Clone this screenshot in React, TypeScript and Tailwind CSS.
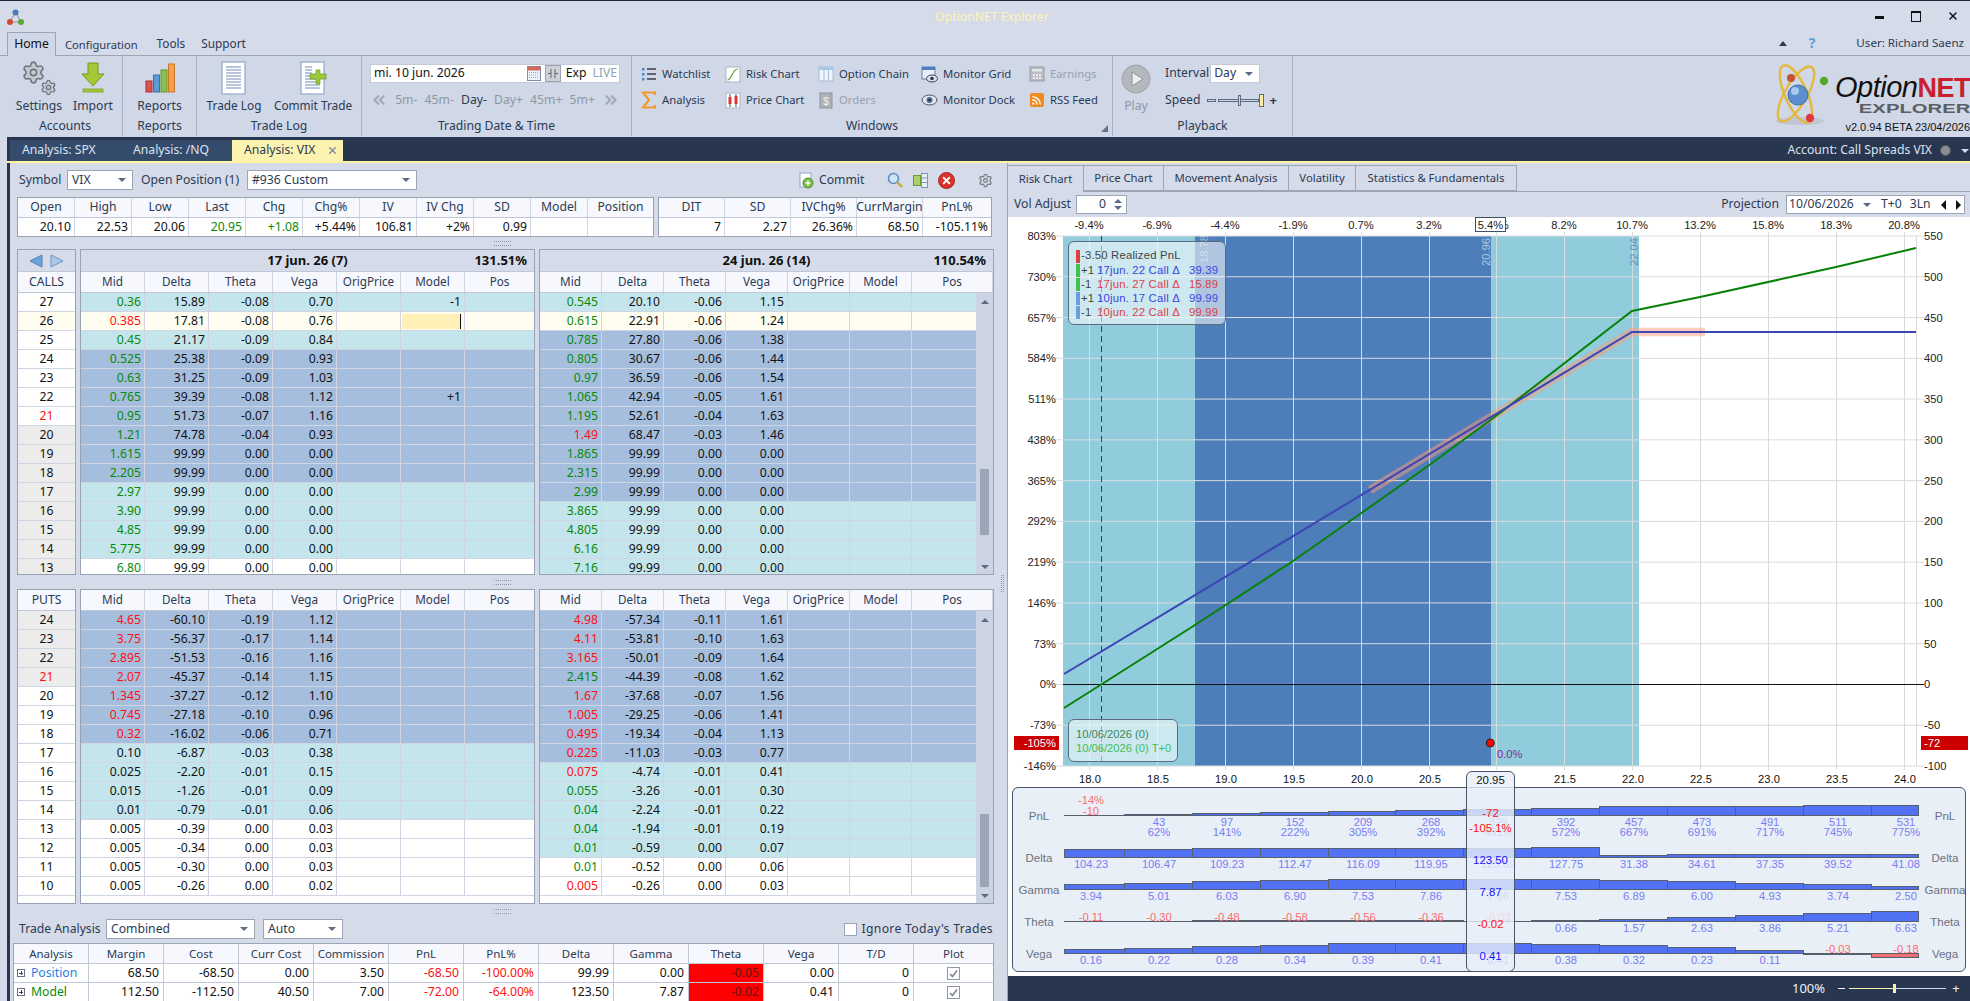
import { ChevronsLeft, ChevronsRight, Rss, Settings, X } from "lucide-react";

type Row = [string, string, string, string, string];

const callsL: Row[] = [
  ["0.36", "15.89", "-0.08", "0.70", "g"],
  ["0.385", "17.81", "-0.08", "0.76", "r"],
  ["0.45", "21.17", "-0.09", "0.84", "g"],
  ["0.525", "25.38", "-0.09", "0.93", "g"],
  ["0.63", "31.25", "-0.09", "1.03", "g"],
  ["0.765", "39.39", "-0.08", "1.12", "g"],
  ["0.95", "51.73", "-0.07", "1.16", "g"],
  ["1.21", "74.78", "-0.04", "0.93", "g"],
  ["1.615", "99.99", "0.00", "0.00", "g"],
  ["2.205", "99.99", "0.00", "0.00", "g"],
  ["2.97", "99.99", "0.00", "0.00", "g"],
  ["3.90", "99.99", "0.00", "0.00", "g"],
  ["4.85", "99.99", "0.00", "0.00", "g"],
  ["5.775", "99.99", "0.00", "0.00", "g"],
  ["6.80", "99.99", "0.00", "0.00", "g"],
];
const callsR: Row[] = [
  ["0.545", "20.10", "-0.06", "1.15", "g"],
  ["0.615", "22.91", "-0.06", "1.24", "g"],
  ["0.785", "27.80", "-0.06", "1.38", "g"],
  ["0.805", "30.67", "-0.06", "1.44", "g"],
  ["0.97", "36.59", "-0.06", "1.54", "g"],
  ["1.065", "42.94", "-0.05", "1.61", "g"],
  ["1.195", "52.61", "-0.04", "1.63", "g"],
  ["1.49", "68.47", "-0.03", "1.46", "r"],
  ["1.865", "99.99", "0.00", "0.00", "g"],
  ["2.315", "99.99", "0.00", "0.00", "g"],
  ["2.99", "99.99", "0.00", "0.00", "g"],
  ["3.865", "99.99", "0.00", "0.00", "g"],
  ["4.805", "99.99", "0.00", "0.00", "g"],
  ["6.16", "99.99", "0.00", "0.00", "g"],
  ["7.16", "99.99", "0.00", "0.00", "g"],
];
const putsL: Row[] = [
  ["4.65", "-60.10", "-0.19", "1.12", "r"],
  ["3.75", "-56.37", "-0.17", "1.14", "r"],
  ["2.895", "-51.53", "-0.16", "1.16", "r"],
  ["2.07", "-45.37", "-0.14", "1.15", "r"],
  ["1.345", "-37.27", "-0.12", "1.10", "r"],
  ["0.745", "-27.18", "-0.10", "0.96", "r"],
  ["0.32", "-16.02", "-0.06", "0.71", "r"],
  ["0.10", "-6.87", "-0.03", "0.38", "k"],
  ["0.025", "-2.20", "-0.01", "0.15", "k"],
  ["0.015", "-1.26", "-0.01", "0.09", "k"],
  ["0.01", "-0.79", "-0.01", "0.06", "k"],
  ["0.005", "-0.39", "0.00", "0.03", "k"],
  ["0.005", "-0.34", "0.00", "0.03", "k"],
  ["0.005", "-0.30", "0.00", "0.03", "k"],
  ["0.005", "-0.26", "0.00", "0.02", "k"],
];
const putsR: Row[] = [
  ["4.98", "-57.34", "-0.11", "1.61", "r"],
  ["4.11", "-53.81", "-0.10", "1.63", "r"],
  ["3.165", "-50.01", "-0.09", "1.64", "r"],
  ["2.415", "-44.39", "-0.08", "1.62", "g"],
  ["1.67", "-37.68", "-0.07", "1.56", "r"],
  ["1.005", "-29.25", "-0.06", "1.41", "r"],
  ["0.495", "-19.34", "-0.04", "1.13", "r"],
  ["0.225", "-11.03", "-0.03", "0.77", "r"],
  ["0.075", "-4.74", "-0.01", "0.41", "r"],
  ["0.055", "-3.26", "-0.01", "0.30", "g"],
  ["0.04", "-2.24", "-0.01", "0.22", "g"],
  ["0.04", "-1.94", "-0.01", "0.19", "g"],
  ["0.01", "-0.59", "0.00", "0.07", "g"],
  ["0.01", "-0.52", "0.00", "0.06", "g"],
  ["0.005", "-0.26", "0.00", "0.03", "r"],
];

const toneClass: Record<string, string> = {
  c: "bg-[#c5e5ed]",
  b: "bg-[#a6bedd]",
  y: "bg-[#fffdf0]",
  w: "bg-white",
  g: "bg-[#ececec]",
};
const midClass: Record<string, string> = {
  g: "text-[#078a07]",
  r: "text-[#ff1010]",
  k: "text-[#111]",
};

const HEADERS = ["Mid", "Delta", "Theta", "Vega", "OrigPrice", "Model", "Pos"];

function Caret({ className = "" }: { className?: string }) {
  return <span className={"w-0 h-0 border-x-[4px] border-x-transparent border-t-[4px] border-t-[#5d6b82] " + className} />;
}

function Select({ label, className }: { label: string; className: string }) {
  return (
    <div className={"h-[20px] bg-white border border-[#9aa5b5] flex items-center justify-between pl-[4px] pr-[6px] text-[#2b3a55] " + className}>
      <span>{label}</span>
      <Caret />
    </div>
  );
}

function Grip({ className = "" }: { className?: string }) {
  return <div className={"w-[17px] h-[5px] border-y border-dotted border-[#8d97a8] " + className} />;
}

function Strikes({ head, items, tones, arrows, height }: { head: string; items: number[]; tones: string; arrows?: boolean; height: string }) {
  return (
    <div className={"w-[59px] shrink-0 border border-[#97a3b5] bg-white overflow-hidden " + height}>
      {arrows && (
        <div className="h-[22px] bg-[#d5dbe8] border-b border-[#c0c7d6] flex items-center justify-center gap-[7px]">
          <svg width="14" height="14" viewBox="0 0 14 14"><path d="M13 1 L1 7 L13 13 Z" fill="#6ea4dc" stroke="#4f7fb8" /></svg>
          <svg width="14" height="14" viewBox="0 0 14 14"><path d="M1 1 L13 7 L1 13 Z" fill="#a9c8ea" stroke="#6d94c0" /></svg>
        </div>
      )}
      <div className="h-[21px] bg-[#f6f8fd] border-b border-[#c0c7d6] flex items-center justify-center text-[#2b3a55]">{head}</div>
      {items.map((s, i) => (
        <div key={s} className={"h-[19px] border-b border-[#cfd5e3] flex items-center justify-center text-[#111] " + toneClass[tones[i]]}>
          <span className={s === 21 ? "text-[#ff1010]" : ""}>{s}</span>
        </div>
      ))}
    </div>
  );
}

function Chain({ title, pct, rows, tones, cols, model, height, scroll, thumb }: {
  title?: string; pct?: string; rows: Row[]; tones: string; cols: string; model?: Record<number, string>; height: string; scroll?: boolean; thumb?: string;
}) {
  return (
    <div className={"flex-1 border border-[#97a3b5] bg-white overflow-hidden flex flex-col " + height}>
      {title && (
        <div className="h-[22px] shrink-0 bg-[#d5dbe8] border-b border-[#c0c7d6] flex items-center justify-center relative font-bold text-[#111] text-[13px]">
          {title}
          <span className="absolute right-[7px]">{pct}</span>
        </div>
      )}
      <div className={"h-[21px] shrink-0 bg-[#f6f8fd] border-b border-[#c0c7d6] grid text-[#2b3a55] text-[11.7px] " + cols}>
        {HEADERS.map((h, i) => (
          <div key={h} className={"flex items-center justify-center " + (i < 6 || scroll ? "border-r border-[#cfd5e3]" : "")}>{h}</div>
        ))}
      </div>
      <div className="flex-1 flex min-h-0">
        <div className="flex-1">
          {rows.map((r, i) => (
            <div key={i} className={"h-[19px] border-b border-[#cfd5e3] grid text-[#111] " + cols + " " + toneClass[tones[i]]}>
              {[r[0], r[1], r[2], r[3]].map((v, j) => (
                <div key={j} className={"flex items-center justify-end pr-[3px] border-r border-[#cfd5e3] " + (j === 0 ? midClass[r[4]] : "")}>{v}</div>
              ))}
              <div className="border-r border-[#cfd5e3]" />
              <div className="border-r border-[#cfd5e3] flex items-center justify-end pr-[3px]">
                {model && model[i]}
                {model && i === 1 && (
                  <div className="w-[59px] h-[15px] bg-[#fff0b8] border-r border-[#111]" />
                )}
              </div>
              <div />
            </div>
          ))}
        </div>
        {scroll && (
          <div className="w-[17px] shrink-0 bg-[#ccd3e3] flex flex-col items-center pt-[7px] pb-[5px]">
            <span className="w-0 h-0 border-x-[4px] border-x-transparent border-b-[4px] border-b-[#5d6b82]" />
            <div className={"w-[9px] bg-[#9aa6b5] " + thumb} />
            <span className="mt-auto w-0 h-0 border-x-[4px] border-x-transparent border-t-[4px] border-t-[#5d6b82]" />
          </div>
        )}
      </div>
    </div>
  );
}

function Summary({ heads, values, cols, className }: { heads: string[]; values: [string, string?][]; cols: string; className: string }) {
  return (
    <div className={"h-[40px] border border-[#97a3b5] bg-white " + className}>
      <div className={"h-[20px] bg-[#f6f8fd] border-b border-[#c0c7d6] grid text-[#2b3a55] " + cols}>
        {heads.map((h, i) => (
          <div key={i} className={"flex items-center justify-center " + (i < heads.length - 1 ? "border-r border-[#cfd5e3]" : "")}>{h}</div>
        ))}
      </div>
      <div className={"h-[18px] grid text-[#111] " + cols}>
        {values.map(([v, c], i) => (
          <div key={i} className={"flex items-center justify-end pr-[3px] " + (c || "") + (i < values.length - 1 ? " border-r border-[#cfd5e3]" : "")}>{v}</div>
        ))}
      </div>
    </div>
  );
}

function CheckBox() {
  return (
    <div className="w-[13px] h-[13px] bg-white border border-[#8e99a8] flex items-center justify-center">
      <svg width="9" height="9" viewBox="0 0 9 9"><path d="M1 5 L3.5 7.5 L8 1.5" fill="none" stroke="#7d8795" strokeWidth="1.6" /></svg>
    </div>
  );
}

function TradeRow({ name, color, cells }: { name: string; color: string; cells: [string, string?][] }) {
  const cols = "grid grid-cols-[75px_75px_75px_75px_75px_75px_75px_75px_75px_75px_75px_75px_1fr]";
  return (
    <div className={"h-[19px] border-b border-[#c0c7d6] text-[#111] " + cols}>
      <div className="flex items-center pl-[3px] gap-[6px] border-r border-[#c0c7d6]">
        <span className="w-[8px] h-[8px] border border-[#667285] relative">
          <span className="absolute left-[1px] right-[1px] top-[2.5px] h-px bg-[#445]" />
          <span className="absolute top-[1px] bottom-[1px] left-[2.5px] w-px bg-[#445]" />
        </span>
        <span className={color}>{name}</span>
      </div>
      {cells.map(([v, c], i) => (
        <div key={i} className={"flex items-center justify-end pr-[4px] border-r border-[#c0c7d6] " + (c || "")}>{v}</div>
      ))}
      <div className="flex items-center justify-center"><CheckBox /></div>
    </div>
  );
}

/* ribbon pictures */
function Gears() {
  return (
    <div className="w-[36px] h-[36px] relative">
      <Settings size={25} className="absolute left-0 top-0" fill="#c5cad2" stroke="#6f7680" strokeWidth={1.5} />
      <Settings size={17} className="absolute right-0 bottom-0" fill="#c5cad2" stroke="#6f7680" strokeWidth={1.8} />
    </div>
  );
}
function ImportIcon() {
  return (
    <svg width="24" height="32" viewBox="0 0 24 32">
      <path d="M7 1 H17 V12 H23 L12 24 L1 12 H7 Z" fill="#a4c935" stroke="#6f9a1e" />
      <rect x="2" y="27" width="20" height="3" fill="#a4c935" stroke="#6f9a1e" strokeWidth="0.7" />
    </svg>
  );
}
function ReportsIcon() {
  return (
    <svg width="30" height="30" viewBox="0 0 30 30">
      <rect x="1" y="18" width="6" height="11" fill="#d9534f" stroke="#a33" />
      <rect x="8.5" y="12" width="6" height="17" fill="#5b9bd5" stroke="#3a70a8" />
      <rect x="16" y="7" width="6" height="22" fill="#8cc152" stroke="#5f9530" />
      <rect x="23.5" y="1" width="6" height="28" fill="#f6a04d" stroke="#c97826" />
    </svg>
  );
}
function DocIcon({ plus }: { plus?: boolean }) {
  const lines = [6, 9, 12, 15, 18, 21, 24, 27];
  return (
    <svg width="28" height="34" viewBox="0 0 28 34">
      <rect x="2" y="1" width="23" height="32" fill="#fff" stroke="#8fa8cc" strokeWidth="1.2" />
      {lines.map((y) => <line key={y} x1="6" x2={plus && y < 18 ? 13 : 21} y1={y} y2={y} stroke="#7f95bd" strokeWidth="1.1" />)}
      {plus && <path d="M17 9 H21 V13 H27 V18 H21 V23 H17 V18 H11 V13 H17 Z" fill="#9ac93c" stroke="#6f9a1e" strokeWidth="0.7" />}
    </svg>
  );
}
function BigButton({ label, icon, className }: { label: string; icon: React.ReactNode; className: string }) {
  return (
    <div className={"h-[60px] flex flex-col items-center " + className}>
      <div className="h-[44px] flex items-center justify-center">{icon}</div>
      <span>{label}</span>
    </div>
  );
}
const SmallIcons: Record<string, React.ReactNode> = {
  Watchlist: (
    <svg width="16" height="16" viewBox="0 0 16 16">
      {[3, 8, 13].map((y) => <g key={y}><rect x="1" y={y - 1} width="2.5" height="2.5" fill="#4a8ad0" /><line x1="6" x2="15" y1={y} y2={y} stroke="#334" strokeWidth="1.4" /></g>)}
    </svg>
  ),
  Analysis: (
    <svg width="16" height="18" viewBox="0 0 16 18"><path d="M14 4 V1.5 H2 L8 9 L2 16.5 H14 V14" fill="none" stroke="#f09a2e" strokeWidth="2.2" /></svg>
  ),
  "Risk Chart": (
    <svg width="16" height="17" viewBox="0 0 16 17"><rect x="1" y="1" width="14" height="15" fill="#fff" stroke="#a9b4c6" /><path d="M2.5 14 C7 14 7 3 13 3" fill="none" stroke="#6b9a3a" strokeWidth="1.2" /></svg>
  ),
  "Price Chart": (
    <svg width="16" height="17" viewBox="0 0 16 17"><rect x="1" y="1" width="14" height="15" fill="#fff" stroke="#a9b4c6" /><line x1="5" x2="5" y1="2" y2="15" stroke="#446" /><rect x="3.5" y="5" width="3" height="7" fill="#d33" /><line x1="11" x2="11" y1="2" y2="15" stroke="#446" /><rect x="9.5" y="4" width="3" height="8" fill="#d33" /></svg>
  ),
  "Option Chain": (
    <svg width="16" height="16" viewBox="0 0 16 16"><rect x="1" y="1" width="14" height="14" fill="#eef4fb" stroke="#a8bdd8" /><rect x="1" y="1" width="14" height="3" fill="#a8c8ea" /><line x1="6" x2="6" y1="4" y2="15" stroke="#a8bdd8" /><line x1="10.5" x2="10.5" y1="4" y2="15" stroke="#a8bdd8" /></svg>
  ),
  Orders: (
    <svg width="16" height="17" viewBox="0 0 16 17"><rect x="2" y="1" width="12" height="15" fill="#aeb3ba" stroke="#8d939b" /><text x="8" y="13" textAnchor="middle" fontSize="10" fill="#f2f2f2" fontFamily="Liberation Sans">$</text></svg>
  ),
  "Monitor Grid": (
    <svg width="17" height="17" viewBox="0 0 17 17"><rect x="1" y="1" width="13" height="12" fill="#e8eff8" stroke="#5e80b0" /><rect x="1" y="1" width="13" height="3" fill="#4f7fc0" /><ellipse cx="11" cy="12.5" rx="5.5" ry="3.5" fill="#dfe5ee" stroke="#445" /><circle cx="11" cy="12.5" r="1.8" fill="#334" /></svg>
  ),
  "Monitor Dock": (
    <svg width="17" height="14" viewBox="0 0 17 14"><ellipse cx="8.5" cy="7" rx="7.5" ry="5" fill="#dfe5ee" stroke="#556" /><circle cx="8.5" cy="7" r="3" fill="#55708f" /><circle cx="8.5" cy="7" r="1.2" fill="#223" /></svg>
  ),
  Earnings: (
    <svg width="16" height="16" viewBox="0 0 16 16"><rect x="1" y="1" width="14" height="14" fill="#b9bdc3" stroke="#999ea6" /><rect x="3" y="3" width="10" height="2.5" fill="#e5e7ea" />{[4, 7, 10].map((x) => [8, 11].map((y) => <rect key={`${x}${y}`} x={x} y={y} width="2" height="2" fill="#eee" />))}</svg>
  ),
  "RSS Feed": (
    <span className="w-[14px] h-[14px] bg-[#f28a1e] rounded-[2px] flex items-center justify-center"><Rss size={11} color="#fff" strokeWidth={3} /></span>
  ),
};
function WinItem({ label, dim }: { label: string; dim?: boolean }) {
  return (
    <div className={"h-[26px] flex items-center gap-[5px] text-[11.3px] " + (dim ? "text-[#9aa2ae]" : "")}>
      <span className="w-[17px] flex justify-center">{SmallIcons[label]}</span>
      {label}
    </div>
  );
}

function AtomLogo() {
  return (
    <svg width="60" height="62" viewBox="0 0 60 62" className="mt-[8px]">
      <ellipse cx="30" cy="57" rx="24" ry="4" fill="#b9bfca" opacity="0.7" />
      <g fill="none" stroke="#e3b93c" strokeWidth="2.4">
        <ellipse cx="26" cy="30" rx="11" ry="31" transform="rotate(-24 26 30)" />
        <ellipse cx="26" cy="30" rx="11" ry="31" transform="rotate(30 26 30)" />
      </g>
      <circle cx="28" cy="31" r="10" fill="#5b8fd0" stroke="#3f6eaa" />
      <circle cx="25" cy="27" r="4" fill="#a9c9ee" />
      <circle cx="21" cy="14" r="4" fill="#c5532f" />
      <circle cx="54" cy="17" r="4.2" fill="#54a82e" />
      <circle cx="40" cy="54" r="4.2" fill="#e0383c" />
    </svg>
  );
}

/* chart */
const GX = [1089, 1157, 1225, 1293, 1361, 1429, 1496, 1564, 1632, 1700, 1768, 1836, 1904];
const TOP = ["-9.4%", "-6.9%", "-4.4%", "-1.9%", "0.7%", "3.2%", "5.7%", "8.2%", "10.7%", "13.2%", "15.8%", "18.3%", "20.8%"];
const BOT = ["18.0", "18.5", "19.0", "19.5", "20.0", "20.5", "", "21.5", "22.0", "22.5", "23.0", "23.5", "24.0"];
const LP = ["803%", "730%", "657%", "584%", "511%", "438%", "365%", "292%", "219%", "146%", "73%", "0%", "-73%", "-146%"];
const RP = ["550", "500", "450", "400", "350", "300", "250", "200", "150", "100", "50", "0", "-50", "-100"];
const yAt = (i: number) => 236 + (i * 530) / 13;

function RiskChart() {
  return (
    <svg width="962" height="570" viewBox="1008 217 962 570" className="block font-['Liberation_Sans',sans-serif] text-[11.2px]">
      <rect x="1063" y="236" width="576" height="530" fill="#90ccdb" />
      <rect x="1195" y="236" width="296" height="530" fill="#4d7eb9" />
      {GX.map((x) => <line key={x} x1={x + 0.5} x2={x + 0.5} y1="232" y2="770" stroke="#d9dcdf" strokeWidth="1" />)}
      <line x1="1916.5" x2="1916.5" y1="236" y2="766" stroke="#d9d9d9" />
      {LP.map((_, i) => <line key={i} x1="1056" x2="1924" y1={yAt(i)} y2={yAt(i)} stroke="#d9dcdf" />)}
      <line x1="1063" x2="1924" y1="684.5" y2="684.5" stroke="#111" />
      <line x1="1101.5" x2="1101.5" y1="236" y2="766" stroke="#6a1b8a" strokeWidth="1" strokeDasharray="6 4" />
      <g transform="rotate(-90 1208 263)"><text x="1208" y="263" fill="#ffffff" opacity="0.45">18.78</text></g>
      <g transform="rotate(-90 1490 266)"><text x="1490" y="266" fill="#a9c8e4">20.96</text></g>
      <g transform="rotate(-90 1638 266)"><text x="1638" y="266" fill="#5f92c8">22.04</text></g>
      <g transform="rotate(-90 1100 758)"><text x="1100" y="758" fill="#c79ad4">18.08</text></g>
      <path d="M1370 490 L1632 332 H1705" fill="none" stroke="#ff9b78" strokeOpacity="0.5" strokeWidth="8.5" />
      <path d="M1064 708 L1102 684 L1195 625 L1293 561 L1360 514 L1428 466 L1500 413 L1632 311 L1700 297 L1836 267 L1916 248" fill="none" stroke="#078207" strokeWidth="2" />
      <path d="M1064 674 L1632 332 H1916" fill="none" stroke="#3b45b5" strokeWidth="2" />
      {TOP.map((t, i) => <text key={t} x={GX[i]} y="229" textAnchor="middle" fill="#222">{t}</text>)}
      <rect x="1475.5" y="217.5" width="30" height="14" fill="#fff" stroke="#3f4f66" />
      <text x="1490.5" y="229" textAnchor="middle" fill="#222">5.4%</text>
      {BOT.map((t, i) => t && <text key={t} x={GX[i] + 1} y="783" textAnchor="middle" fill="#111">{t}</text>)}
      {LP.map((t, i) => <text key={t} x="1056" y={yAt(i) + 4} textAnchor="end" fill="#222">{t}</text>)}
      {RP.map((t, i) => <text key={t} x="1924" y={yAt(i) + 4} fill="#222">{t}</text>)}
      <rect x="1014" y="736" width="45" height="14" fill="#cc0000" />
      <text x="1056" y="747" textAnchor="end" fill="#fff">-105%</text>
      <rect x="1921" y="736" width="47" height="14" fill="#cc0000" />
      <text x="1924" y="747" fill="#fff">-72</text>
      <circle cx="1490.3" cy="743" r="4" fill="#ff0000" stroke="#222" />
      <text x="1497" y="758" fill="#8a2a9a">0.0%</text>
    </svg>
  );
}

const EDGES = [1064, 1124, 1192, 1260, 1328, 1395, 1463, 1531, 1599, 1667, 1735, 1803, 1871, 1918];
type Strip = { name: string; base: number; h: number[]; below: string[] };
const STRIPS: Strip[] = [
  { name: "Delta", base: 857, h: [8, 8, 9, 9, 9, 9, 9, 10, 2, 3, 3, 3, 3], below: ["104.23", "106.47", "109.23", "112.47", "116.09", "119.95", "123.69", "127.75", "31.38", "34.61", "37.35", "39.52", "41.08"] },
  { name: "Gamma", base: 889, h: [5, 6, 8, 9, 10, 10, 10, 10, 9, 8, 6, 5, 3], below: ["3.94", "5.01", "6.03", "6.90", "7.53", "7.86", "7.66", "7.53", "6.89", "6.00", "4.93", "3.74", "2.50"] },
  { name: "Theta", base: 921, h: [0, 0, 1, 1, 1, 1, 0, 1, 2, 4, 6, 8, 10], below: ["-0.11", "-0.30", "-0.48", "-0.58", "-0.56", "-0.36", "-0.03", "0.66", "1.57", "2.63", "3.86", "5.21", "6.63"] },
  { name: "Vega", base: 953, h: [4, 5, 7, 8, 10, 10, 10, 9, 8, 6, 3, -1, -4], below: ["0.16", "0.22", "0.28", "0.34", "0.39", "0.41", "0.41", "0.38", "0.32", "0.23", "0.11", "-0.03", "-0.18"] },
];
const PNL = [[0, "-10", "-14%"], [1, "43", "62%"], [2, "97", "141%"], [3, "152", "222%"], [4, "209", "305%"], [5, "268", "392%"], [6, "329", "481%"], [7, "392", "572%"], [9, "457", "667%"], [9, "473", "691%"], [9, "491", "717%"], [10, "511", "745%"], [10, "531", "775%"]] as [number, string, string][];
const VAL = "#7a7cf4";
const NEG = "#ff6b6b";

function Bar({ i, base, h }: { i: number; base: number; h: number }) {
  const x = EDGES[i];
  const w = EDGES[i + 1] - x;
  if (h === 0) return <line x1={x} x2={x + w} y1={base + 0.5} y2={base + 0.5} stroke="#555f6e" />;
  return h > 0 ? (
    <rect x={x + 0.5} y={base - h + 0.5} width={w} height={h} fill="#5272f5" stroke="#555f6e" />
  ) : (
    <rect x={x + 0.5} y={base + 0.5} width={w} height={-h} fill={h < -2 ? "#ee7070" : "#555f6e"} stroke="#555f6e" />
  );
}

function GreekPanel() {
  return (
    <svg width="952" height="183" viewBox="1013 788 952 183" className="block font-['Liberation_Sans',sans-serif] text-[11.2px]">
      {["PnL", "Delta", "Gamma", "Theta", "Vega"].map((n, r) => (
        <g key={n} fill="#6b7280" textAnchor="middle" fontSize="11.5">
          <text x="1039" y={820 + r * 32 + (r > 0 ? 10 : 0)}>{n}</text>
          <text x="1945" y={820 + r * 32 + (r > 0 ? 10 : 0)}>{n}</text>
        </g>
      ))}
      {PNL.map(([h, a, b], i) => (
        <g key={a} textAnchor="middle">
          <Bar i={i} base={815} h={h} />
          {i === 0 ? (
            <g fill={NEG}><text x={GX[0] + 2} y="804">{b}</text><text x={GX[0] + 2} y="815">{a}</text></g>
          ) : (
            <g fill={VAL}><text x={GX[i] + 2} y="826">{a}</text><text x={GX[i] + 2} y="836">{b}</text></g>
          )}
        </g>
      ))}
      {STRIPS.map((s) =>
        s.h.map((h, i) => {
          const neg = s.below[i].startsWith("-");
          return (
            <g key={s.name + i}>
              <Bar i={i} base={s.base} h={h} />
              <text x={GX[i] + 2} y={neg ? s.base : s.base + 11} textAnchor="middle" fill={neg ? NEG : VAL}>{s.below[i]}</text>
            </g>
          );
        })
      )}
    </svg>
  );
}

function Cursor() {
  const items: [string, number, string][] = [["20.95", 12, "#111"], ["-72", 45, "#ff1010"], ["-105.1%", 60, "#ff1010"], ["123.50", 92, "#1414ff"], ["7.87", 124, "#1414ff"], ["-0.02", 156, "#ff1010"], ["0.41", 188, "#1414ff"]];
  return (
    <div className="absolute left-[458px] top-[554px] w-[49px] h-[201px] rounded-[6px] border border-[#4a5568] bg-[#e8eff7]/80">
      <svg width="47" height="199" viewBox="0 0 47 199" className="block font-['Liberation_Sans',sans-serif] text-[11.4px]">
        {items.map(([t, y, c]) => <text key={t} x="23.5" y={y} textAnchor="middle" fill={c}>{t}</text>)}
      </svg>
    </div>
  );
}

function Legend() {
  const rows: [string, string, string, string, string][] = [
    ["bg-[#3fc04f]", "+1", "17jun. 22 Call Δ", "39.39", "text-[#3b45e0]"],
    ["bg-[#3fc04f]", "-1", "17jun. 27 Call Δ", "15.89", "text-[#e0404a]"],
    ["bg-[#6a9ee0]", "+1", "10jun. 17 Call Δ", "99.99", "text-[#3b45e0]"],
    ["bg-[#6a9ee0]", "-1", "10jun. 22 Call Δ", "99.99", "text-[#e0404a]"],
  ];
  return (
    <div className="absolute left-[60px] top-[24px] w-[158px] h-[84px] rounded-[6px] border border-[#5b6b80] bg-white/55 pl-[7px] pt-[7px] font-['Liberation_Sans',sans-serif] text-[11.3px] text-[#444] tracking-[0.2px]">
      <div className="h-[14.2px] flex items-center"><span className="w-[4px] h-[13px] bg-[#e23c3c] mr-px" />-3.50 Realized PnL</div>
      {rows.map(([bar, q, name, v, c]) => (
        <div key={name} className="h-[14.2px] flex items-center">
          <span className={"w-[4px] h-[13px] mr-px " + bar} />
          <span className="w-[16px]">{q}</span>
          <span className={"w-[92px] " + c}>{name}</span>
          <span className={"w-[28px] text-right " + c}>{v}</span>
        </div>
      ))}
    </div>
  );
}

function RibbonGroup({ label, className, children }: { label: string; className: string; children: React.ReactNode }) {
  return (
    <div className={"h-[80px] border-r border-[#aab3c4] flex flex-col " + className}>
      <div className="h-[60px]">{children}</div>
      <div className="h-[20px] text-center pt-[4px]">{label}</div>
    </div>
  );
}

export default function App() {
  return (
    <div className="w-[1970px] h-[1001px] overflow-hidden bg-[#d5dbe8] font-['Noto_Sans',sans-serif] text-[12.2px] leading-none text-[#2b3a55] flex flex-col">
      {/* title + menu */}
      <div className="h-[56px] shrink-0 border-t-[1.5px] border-[#23262d] border-b border-b-[#9aa5b5] flex flex-col">
        <div className="h-[30px] flex items-center">
          <div className="w-[114px] pl-[7px] pt-[2px]">
            <svg width="17" height="17" viewBox="0 0 17 17">
              <path d="M8.5 3 L3 13 H14 Z" fill="none" stroke="#8a94a5" />
              <circle cx="8.5" cy="3.5" r="3" fill="#4a78b8" />
              <circle cx="3" cy="13" r="3" fill="#d2482e" />
              <circle cx="14" cy="13" r="3" fill="#58a832" />
            </svg>
          </div>
          <div className="flex-1 text-center text-[#fdf3b5] pt-[2px]">OptionNET Explorer</div>
          <div className="w-[100px] flex items-center text-[#111] pl-[5px]">
            <span className="w-[9px] h-[3px] bg-[#111] mt-[3px]" />
            <span className="w-[10px] h-[11px] border border-[#111] border-t-2 ml-[27px]" />
            <X size={12} strokeWidth={3} className="ml-[26px]" />
          </div>
        </div>
        <div className="flex-1 flex items-end pl-[7px] relative">
          <div className="w-[49px] h-[24px] bg-[#d0d7e6] border border-b-0 border-[#9aa5b5] -mb-px flex items-center justify-center text-[#111]">Home</div>
          <span className="ml-[9px] mb-[5px] text-[11.2px]">Configuration</span>
          <span className="ml-[19px] mb-[5px] text-[11.8px]">Tools</span>
          <span className="ml-[16px] mb-[5px] text-[11.8px]">Support</span>
          <div className="ml-auto mb-[5px] mr-[6px] flex items-center text-[11.6px]">
            <span className="w-0 h-0 border-x-[4.5px] border-x-transparent border-b-[5px] border-b-[#2b3a55]" />
            <span className="ml-[22px] mr-[41px] text-[#5aa3d8] font-bold text-[14px]">?</span>
            <span>User: Richard Saenz</span>
          </div>
        </div>
      </div>

      {/* ribbon */}
      <div className="h-[81px] shrink-0 bg-[#d0d7e6] flex pl-[8px]">
        <RibbonGroup label="Accounts" className="w-[115px]">
          <div className="flex pl-[4px]">
            <BigButton label="Settings" icon={<Gears />} className="w-[54px]" />
            <BigButton label="Import" icon={<ImportIcon />} className="w-[54px]" />
          </div>
        </RibbonGroup>
        <RibbonGroup label="Reports" className="w-[74px]">
          <BigButton label="Reports" icon={<ReportsIcon />} className="w-full" />
        </RibbonGroup>
        <RibbonGroup label="Trade Log" className="w-[165px]">
          <div className="flex pl-[2px] text-[11.8px]">
            <BigButton label="Trade Log" icon={<DocIcon />} className="w-[70px]" />
            <BigButton label="Commit Trade" icon={<DocIcon plus />} className="w-[88px]" />
          </div>
        </RibbonGroup>
        <RibbonGroup label="Trading Date & Time" className="w-[270px]">
          <div className="pl-[8px] pr-[11px] pt-[8px]">
            <div className="h-[19px] bg-white border border-[#c3cad8] flex items-center pl-[3px] pr-[2px] text-[#111]">
              <span className="flex-1">mi. 10 jun. 2026</span>
              <svg width="14" height="15" viewBox="0 0 14 15" className="mr-[4px]">
                <rect x="0.5" y="0.5" width="13" height="14" fill="#eef2fa" stroke="#7b8eb0" />
                <rect x="0.5" y="0.5" width="13" height="4" fill="#d46a5c" />
                {[6.5, 9, 11.5].map((y) => <line key={y} x1="2" x2="12" y1={y} y2={y} stroke="#9ab" strokeDasharray="1 1" />)}
              </svg>
              <span className="w-[16px] h-[17px] bg-[#cdd2da] border border-[#9aa3b0] flex items-center justify-center mr-[5px]">
                <svg width="10" height="9" viewBox="0 0 10 9"><path d="M3 0 V9 M7 0 V9 M0 4.500 H3 M7 4.500 H10" stroke="#666" /></svg>
              </span>
              <span className="mr-[6px]">Exp</span>
              <span className="text-[#93a0b8]">LIVE</span>
            </div>
            <div className="h-[24px] mt-[5px] flex items-center justify-between text-[#8f97a4]">
              <ChevronsLeft size={18} strokeWidth={3} className="text-[#a3a9b3]" />
              <span>5m-</span><span>45m-</span><span className="text-[#2b3a55]">Day-</span><span>Day+</span><span>45m+</span><span>5m+</span>
              <ChevronsRight size={18} strokeWidth={3} className="text-[#a3a9b3]" />
            </div>
          </div>
        </RibbonGroup>
        <RibbonGroup label="Windows" className="w-[481px] relative">
          <div className="flex pl-[8px] pt-[5px]">
            <div className="w-[84px]"><WinItem label="Watchlist" /><WinItem label="Analysis" /></div>
            <div className="w-[93px]"><WinItem label="Risk Chart" /><WinItem label="Price Chart" /></div>
            <div className="w-[104px]"><WinItem label="Option Chain" /><WinItem label="Orders" dim /></div>
            <div className="w-[107px]"><WinItem label="Monitor Grid" /><WinItem label="Monitor Dock" /></div>
            <div><WinItem label="Earnings" dim /><WinItem label="RSS Feed" /></div>
          </div>
          <span className="absolute right-[4px] bottom-[4px] w-0 h-0 border-l-[7px] border-l-transparent border-b-[7px] border-b-[#66738a]" />
        </RibbonGroup>
        <RibbonGroup label="Playback" className="w-[180px]">
          <div className="flex pl-[1px] pt-[8px]">
            <div className="w-[44px] flex flex-col items-center text-[#8f97a4]">
              <svg width="30" height="30" viewBox="0 0 30 30">
                <circle cx="15" cy="15" r="14" fill="#b4b8bd" stroke="#a0a4aa" />
                <path d="M11 8 L22 15 L11 22 Z" fill="#eceef0" stroke="#8e9298" />
              </svg>
              <span className="mt-[6px]">Play</span>
            </div>
            <div className="pl-[7px]">
              <div className="h-[19px] flex items-center">
                <span>Interval</span>
                <div className="ml-[1px] w-[50px] h-[19px] bg-white border border-[#c3cad8] flex items-center justify-between pl-[3px] pr-[6px]">
                  <span>Day</span><Caret />
                </div>
              </div>
              <div className="h-[19px] mt-[8px] flex items-center">
                <span>Speed</span>
                <span className="ml-[7px] w-[9px] h-[3px] border border-[#5d6b82]" />
                <div className="ml-[2px] w-[41px] h-[3px] border border-[#5d6b82] relative">
                  <span className="absolute left-[19px] -top-[5px] w-[3px] h-[11px] border border-[#5d6b82] bg-[#d0d7e6]" />
                </div>
                <span className="w-[5px] h-[13px] bg-[#fdeea0] border border-[#5d6b82]" />
                <span className="ml-[5px] text-[13px] font-bold">+</span>
              </div>
            </div>
          </div>
        </RibbonGroup>
        <div className="flex-1 flex justify-end overflow-hidden">
          <AtomLogo />
          <div className="w-[138px] ml-[2px] flex flex-col items-end font-['Liberation_Sans',sans-serif] text-[#111]">
            <div className="mt-[17px] h-[28px] flex items-baseline tracking-[-0.5px] whitespace-nowrap">
              <span className="italic text-[29px]">Option</span>
              <span className="text-[#c8202c] text-[27px] font-bold">NET</span>
            </div>
            <div className="mt-[1px] h-[14px] text-[13.5px] font-bold text-[#5a5f66] origin-right scale-x-[1.5] whitespace-nowrap">EXPLORER</div>
            <div className="mt-[6px] text-[11px] whitespace-nowrap">v2.0.94 BETA 23/04/2026</div>
          </div>
        </div>
      </div>

      {/* document tabs */}
      <div className="ml-[7px] h-[26px] shrink-0 bg-[#29364f] border-b-2 border-[#fdf3a0] flex items-end pl-[3px] text-[#dbe3f0]">
        <div className="w-[111px] h-[21px] bg-[#344b6c] flex items-center pl-[12px]">Analysis: SPX</div>
        <div className="w-[111px] h-[21px] bg-[#344b6c] flex items-center pl-[12px]">Analysis: /NQ</div>
        <div className="w-[111px] h-[21px] bg-[#fdf3b0] flex items-center pl-[12px] text-[#2b3a55]">
          Analysis: VIX
          <X size={11} strokeWidth={3} className="ml-[12px] text-[#7d8aa0]" />
        </div>
        <div className="ml-auto h-[21px] flex items-center">
          Account: Call Spreads VIX
          <span className="ml-[8px] w-[11px] h-[11px] rounded-full bg-[#8a8d92] border border-[#55585e]" />
          <span className="ml-[10px] mr-[1px]"><Caret className="block border-t-[#d5dbe8]" /></span>
        </div>
      </div>

      {/* body */}
      <div className="flex-1 min-h-0 flex pl-[7px]">
        <div className="w-[3px] bg-[#29364f]" />
        {/* left pane */}
        <div className="w-[998px] shrink-0 border-r border-[#9aa5b5] relative">
          <div className="h-[34px] flex items-center pl-[9px]">
            <span className="w-[48px]">Symbol</span>
            <Select label="VIX" className="w-[66px]" />
            <span className="ml-[8px] w-[106px]">Open Position (1)</span>
            <Select label="#936 Custom" className="w-[170px]" />
            <svg width="15" height="17" viewBox="0 0 15 17" className="ml-[382px]">
              <rect x="1" y="1" width="11" height="14" fill="#fff" stroke="#8fa8cc" />
              <circle cx="9" cy="11" r="5" fill="#7cc04a" stroke="#4f8f2a" />
              <path d="M9 8.500 V13.500 M6.500 11 H11.500" stroke="#fff" strokeWidth="1.4" />
            </svg>
            <span className="ml-[5px]">Commit</span>
            <svg width="16" height="17" viewBox="0 0 16 17" className="ml-[23px]">
              <circle cx="6.5" cy="6.5" r="5" fill="#cfe4f7" stroke="#5d8fc4" strokeWidth="1.6" />
              <path d="M10 10 L15 15" stroke="#d2a43c" strokeWidth="2.4" />
            </svg>
            <svg width="15" height="15" viewBox="0 0 15 15" className="ml-[10px]">
              <rect x="0.5" y="2.5" width="7" height="10" fill="#a9d06a" stroke="#6b9a32" />
              <rect x="8.5" y="0.5" width="6" height="14" fill="#e8f0f8" stroke="#7f97b8" />
              <path d="M9 5 H14 M9 9.500 H14" stroke="#7f97b8" />
            </svg>
            <span className="ml-[10px] w-[17px] h-[17px] rounded-full bg-[#d9342c] border border-[#a82420] flex items-center justify-center"><X size={11} strokeWidth={4} color="#fff" /></span>
            <Settings size={15} className="ml-[23px]" fill="#d6dbe3" stroke="#6f7680" strokeWidth={1.8} />
          </div>
          <div className="flex pl-[7px] gap-[4px]">
            <Summary
              className="w-[637px]"
              cols="grid-cols-[57px_57px_57px_57px_57px_57px_57px_57px_57px_57px_1fr]"
              heads={["Open", "High", "Low", "Last", "Chg", "Chg%", "IV", "IV Chg", "SD", "Model", "Position"]}
              values={[["20.10"], ["22.53"], ["20.06"], ["20.95", "text-[#078a07]"], ["+1.08", "text-[#078a07]"], ["+5.44%"], ["106.81"], ["+2%"], ["0.99"], [""], [""]]}
            />
            <Summary
              className="w-[334px]"
              cols="grid-cols-[66px_66px_66px_66px_1fr]"
              heads={["DIT", "SD", "IVChg%", "CurrMargin", "PnL%"]}
              values={[["7"], ["2.27"], ["26.36%"], ["68.50"], ["-105.11%"]]}
            />
          </div>
          <div className="h-[12px] flex items-center pl-[484px]"><Grip /></div>

          <div className="flex pl-[7px] pr-[13px] gap-[4px]">
            <Strikes head="CALLS" arrows height="h-[326px]" tones="wywwwwwgggggggg" items={[27, 26, 25, 24, 23, 22, 21, 20, 19, 18, 17, 16, 15, 14, 13]} />
            <Chain title="17 jun. 26 (7)" pct="131.51%" height="h-[326px]" rows={callsL} tones="cycbbbbbbbccccw" cols="grid-cols-[64px_64px_64px_64px_64px_64px_1fr]" model={{ 0: "-1", 5: "+1" }} />
            <Chain title="24 jun. 26 (14)" pct="110.54%" height="h-[326px]" rows={callsR} tones="cybbbbbbbbbcccc" cols="grid-cols-[62px_62px_62px_62px_62px_62px_1fr]" scroll thumb="mt-[165px] h-[66px]" />
          </div>
          <div className="h-[14px] flex items-center pl-[484px]"><Grip /></div>
          <div className="flex pl-[7px] pr-[13px] gap-[4px]">
            <Strikes head="PUTS" height="h-[315px]" tones="ggggwwwwwwwwwww" items={[24, 23, 22, 21, 20, 19, 18, 17, 16, 15, 14, 13, 12, 11, 10]} />
            <Chain height="h-[315px]" rows={putsL} tones="bbbbbbbccccwwww" cols="grid-cols-[64px_64px_64px_64px_64px_64px_1fr]" />
            <Chain height="h-[315px]" rows={putsR} tones="bbbbbbbbcccccww" cols="grid-cols-[62px_62px_62px_62px_62px_62px_1fr]" scroll thumb="mt-[192px] h-[73px]" />
          </div>
          <div className="h-[15px] flex items-center pl-[484px]"><Grip /></div>

          <div className="h-[20px] flex items-center pl-[9px] pr-[14px]">
            <span className="w-[87px]">Trade Analysis</span>
            <Select label="Combined" className="w-[149px]" />
            <Select label="Auto" className="ml-[8px] w-[80px]" />
            <div className="ml-auto flex items-center gap-[5px]">
              <span className="w-[13px] h-[13px] bg-white border border-[#9aa5b5]" />
              <span className="tracking-[0.3px]">Ignore Today's Trades</span>
            </div>
          </div>
          <div className="ml-[3px] mr-[13px] mt-[4px] border-x border-t border-[#9aa5b5] bg-white">
            <div className="h-[20px] bg-[#f6f8fd] border-b border-[#c0c7d6] grid grid-cols-[75px_75px_75px_75px_75px_75px_75px_75px_75px_75px_75px_75px_1fr] text-[11.5px]">
              {["Analysis", "Margin", "Cost", "Curr Cost", "Commission", "PnL", "PnL%", "Delta", "Gamma", "Theta", "Vega", "T/D", "Plot"].map((h, i) => (
                <div key={h} className={"flex items-center justify-center " + (i < 12 ? "border-r border-[#c0c7d6]" : "")}>{h}</div>
              ))}
            </div>
            <TradeRow
              name="Position"
              color="text-[#1f7fe0]"
              cells={[["68.50"], ["-68.50"], ["0.00"], ["3.50"], ["-68.50", "text-[#ff1010]"], ["-100.00%", "text-[#ff1010]"], ["99.99"], ["0.00"], ["-0.05", "bg-[#ff0000] text-[#6a1010]"], ["0.00"], ["0"]]}
            />
            <TradeRow
              name="Model"
              color="text-[#078a07]"
              cells={[["112.50"], ["-112.50"], ["40.50"], ["7.00"], ["-72.00", "text-[#ff1010]"], ["-64.00%", "text-[#ff1010]"], ["123.50"], ["7.87"], ["-0.02", "bg-[#ff0000] text-[#6a1010]"], ["0.41"], ["0"]]}
            />
          </div>
          <div className="absolute left-[991px] top-[412px] w-[3px] h-[17px] border-x border-dotted border-[#8d97a8]" />
        </div>

        {/* right pane */}
        <div className="flex-1 min-w-0 flex flex-col pt-[2px]">
          <div className="h-[27px] shrink-0 flex border-b border-[#9aa5b5] text-[11.3px]">
            {[["Risk Chart", "w-[75px] border-t border-[#9aa5b5] -mb-px bg-[#d5dbe8]"], ["Price Chart", "w-[81px] border border-[#9aa5b5]"], ["Movement Analysis", "w-[125px] border border-l-0 border-[#9aa5b5]"], ["Volatility", "w-[67px] border border-l-0 border-[#9aa5b5]"], ["Statistics & Fundamentals", "w-[161px] border border-l-0 border-[#9aa5b5]"]].map(([t, c]) => (
              <div key={t} className={"flex items-center justify-center " + c}>{t}</div>
            ))}
          </div>
          <div className="h-[25px] shrink-0 flex items-center pl-[6px]">
            <span className="w-[62px]">Vol Adjust</span>
            <div className="w-[51px] h-[19px] bg-white border border-[#9aa5b5] flex items-center justify-end pr-[4px] gap-[8px]">
              <span>0</span>
              <span className="flex flex-col gap-[3px]">
                <span className="w-0 h-0 border-x-[4px] border-x-transparent border-b-[4px] border-b-[#5d6b82]" />
                <Caret />
              </span>
            </div>
            <span className="ml-auto mr-[7px]">Projection</span>
            <div className="w-[179px] h-[19px] mr-[5px] bg-white border border-[#9aa5b5] flex items-center pl-[2px]">
              <span className="w-[74px]">10/06/2026</span>
              <Caret />
              <span className="ml-[10px]">T+0</span>
              <span className="ml-[8px]">3Ln</span>
              <span className="ml-[10px] w-0 h-0 border-y-[5px] border-y-transparent border-r-[5px] border-r-[#111]" />
              <span className="ml-[10px] w-0 h-0 border-y-[5px] border-y-transparent border-l-[5px] border-l-[#111]" />
            </div>
          </div>
          <div className="flex-1 min-h-0 bg-white relative">
            <RiskChart />
            <div className="ml-[4px] w-[954px] h-[185px] rounded-[6px] border border-[#4a5568] bg-[#e8eff7]">
              <GreekPanel />
            </div>
            <Legend />
            <div className="absolute left-[60px] top-[502px] w-[110px] h-[43px] rounded-[6px] border border-[#5b6b80] bg-white/55 pl-[7px] pt-[9px] font-['Liberation_Sans',sans-serif] text-[11.2px]">
              <div className="h-[14px] text-[#3a8a5a]">10/06/2026 (0)</div>
              <div className="h-[14px] text-[#3cc05a]">10/06/2026 (0) T+0</div>
            </div>
            <Cursor />
          </div>
          <div className="h-[25px] shrink-0 bg-[#29364f] flex items-center text-[#eef2f8] text-[13px] pl-[784px]">
            <span>100%</span>
            <span className="ml-[13px] w-[7px] h-px bg-[#eef2f8]" />
            <div className="ml-[4px] w-[97px] h-px bg-[#cfd6e4] relative">
              <span className="absolute left-0 top-0 w-[46px] h-px bg-[#fdf3b0]" />
              <span className="absolute left-[44px] -top-[4px] w-[3px] h-[9px] bg-[#fdf3b0]" />
            </div>
            <span className="ml-[6px]">+</span>
          </div>
        </div>
      </div>
    </div>
  );
}
